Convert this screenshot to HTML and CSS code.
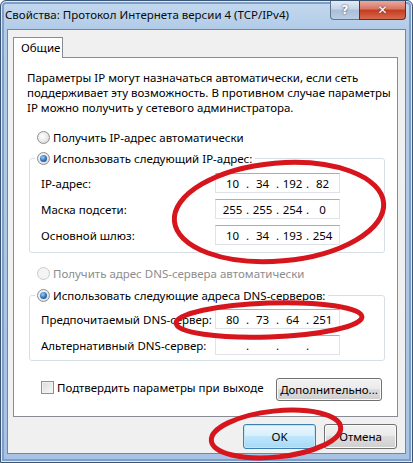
FILE: index.html
```html
<!DOCTYPE html>
<html lang="ru">
<head>
    <meta charset="UTF-8">
    <title>Свойства: Протокол Интернета версии 4 (TCP/IPv4)</title>
    <link rel="stylesheet" href="styles.css">
</head>
<body>
<div class="screen">
    <div class="window">
        <div class="titlebar">
            <span class="title">Свойства: Протокол Интернета версии 4 (TCP/IPv4)</span>
            <div class="caption-buttons">
                <span class="cap-btn help">?</span>
                <span class="cap-btn close">✕</span>
            </div>
        </div>
        <div class="client">
            <div class="tabs"><span class="tab">Общие</span></div>
            <div class="page">
                <p class="intro">Параметры IP могут назначаться автоматически, если сеть<br>поддерживает эту возможность. В противном случае параметры<br>IP можно получить у сетевого администратора.</p>

                <div class="option first"><span class="radio"></span>Получить IP-адрес автоматически</div>
                <fieldset class="group ip-group">
                    <legend><span class="option"><span class="radio checked"></span>Использовать следующий IP-адрес:</span></legend>
                    <div class="fields">
                        <div class="field"><span>IP-адрес:</span>
                            <span class="ip"><span class="oct">10</span><span class="dot">.</span><span class="oct">34</span><span class="dot">.</span><span class="oct">192</span><span class="dot">.</span><span class="oct">82</span></span></div>
                        <div class="field"><span>Маска подсети:</span>
                            <span class="ip"><span class="oct">255</span><span class="dot">.</span><span class="oct">255</span><span class="dot">.</span><span class="oct">254</span><span class="dot">.</span><span class="oct">0</span></span></div>
                        <div class="field"><span>Основной шлюз:</span>
                            <span class="ip"><span class="oct">10</span><span class="dot">.</span><span class="oct">34</span><span class="dot">.</span><span class="oct">193</span><span class="dot">.</span><span class="oct">254</span></span></div>
                    </div>
                </fieldset>

                <div class="option dns-auto disabled"><span class="radio"></span>Получить адрес DNS-сервера автоматически</div>
                <fieldset class="group dns-group">
                    <legend><span class="option"><span class="radio checked"></span>Использовать следующие адреса DNS-серверов:</span></legend>
                    <div class="fields">
                        <div class="field"><span>Предпочитаемый DNS-сервер:</span>
                            <span class="ip"><span class="oct">80</span><span class="dot">.</span><span class="oct">73</span><span class="dot">.</span><span class="oct">64</span><span class="dot">.</span><span class="oct">251</span></span></div>
                        <div class="field"><span>Альтернативный DNS-сервер:</span>
                            <span class="ip"><span class="oct"></span><span class="dot">.</span><span class="oct"></span><span class="dot">.</span><span class="oct"></span><span class="dot">.</span><span class="oct"></span></span></div>
                    </div>
                </fieldset>

                <div class="page-footer">
                    <label class="confirm"><span class="check"></span>Подтвердить параметры при выходе</label>
                    <button class="btn advanced">Дополнительно...</button>
                </div>
            </div>
            <div class="dialog-buttons">
                <button class="btn default">OK</button>
                <button class="btn">Отмена</button>
            </div>
        </div>
    </div>

    <svg class="marks" width="413" height="463" viewBox="0 0 413 463">
        <ellipse cx="279" cy="212" rx="105" ry="49" transform="rotate(-5 279 212)"/>
        <ellipse cx="269" cy="320" rx="93" ry="17" transform="rotate(-2 269 320)"/>
        <ellipse cx="276" cy="434" rx="65" ry="23" transform="rotate(-6 276 434)"/>
    </svg>
</div>
</body>
</html>
```

FILE: styles.css
```css
* {
    box-sizing: border-box;
}
body {
    margin: 0;
    font-family: "Noto Sans", sans-serif;
    font-size: 11.5px;
    color: #000;
    background: #fff;
}
.screen {
    position: relative;
    width: 413px;
    height: 463px;
}
.window {
    width: 413px;
    height: 463px;
    border: 1px solid #3b5675;
    border-radius: 6px 6px 0 0;
    background: linear-gradient(to bottom, #c4d9ef, #b2cbe7 28px, #a7c2e2);
    box-shadow: inset 0 0 0 1px #dce8f5, inset 0 0 0 3px #7f9fca;
    display: flex;
    flex-direction: column;
    overflow: hidden;
}
.titlebar {
    height: 28px;
    display: flex;
    align-items: flex-start;
}
.title {
    padding: 6px 0 0 4px;
    line-height: 16px;
    font-size: 11.5px;
    color: #0a0a0a;
    white-space: nowrap;
}
.caption-buttons {
    margin-left: auto;
    margin-right: 6px;
    display: flex;
}
.cap-btn {
    height: 19px;
    display: flex;
    align-items: center;
    justify-content: center;
    color: #fff;
    font-family: "DejaVu Sans", sans-serif;
    font-weight: bold;
    text-shadow: 0 0 2px #333;
    border: 1px solid #5f7592;
    border-top: none;
}
.help {
    width: 29px;
    font-size: 12px;
    border-radius: 0 0 0 4px;
    border-right: none;
    background: linear-gradient(to bottom, #e3ebf5, #c3d3e6 45%, #a9bed7 50%, #b9cde4);
}
.close {
    width: 47px;
    font-size: 12px;
    border-radius: 0 0 4px 0;
    border-color: #6d2a1f;
    background: linear-gradient(to bottom, #e9a99b, #d87562 45%, #c43b20 50%, #d86a4c);
}
.client {
    flex: 1;
    margin: 0 6px 8px;
    border: 1px solid #6f87a6;
    background: #f0f0f0;
    display: flex;
    flex-direction: column;
}
.tabs {
    padding: 7px 0 0 5px;
    display: flex;
}
.tab {
    width: 50px;
    height: 21px;
    padding: 2px 0 0 7px;
    line-height: 15px;
    border: 1px solid #898c95;
    border-bottom: none;
    background: #fff;
    margin-bottom: -1px;
    position: relative;
    z-index: 1;
}
.page {
    margin: 0 7px 0 5px;
    height: 360px;
    border: 1px solid #898c95;
    background: #fff;
    padding-top: 12px;
}
.intro {
    margin: 0 0 0 13px;
    line-height: 15px;
    white-space: nowrap;
}
.option {
    display: flex;
    align-items: center;
    height: 15px;
    line-height: 15px;
    white-space: nowrap;
}
.option.first {
    margin: 15px 0 0 23px;
}
.option.dns-auto {
    margin: 13px 0 0 23px;
}
.option.disabled {
    color: #8d8d8d;
}
.radio {
    flex: none;
    position: relative;
    width: 13px;
    height: 13px;
    margin-right: 3px;
    border-radius: 50%;
    border: 1px solid #8b8f94;
    background: radial-gradient(circle at 40% 40%, #ffffff, #e8e8e8 55%, #c6c8cb);
}
.radio.checked::after {
    content: "";
    position: absolute;
    inset: 2px;
    border-radius: 50%;
    background: radial-gradient(circle at 40% 35%, #9fd0f5, #2d6fbb 55%, #173f70);
}
.disabled .radio {
    border-color: #c7cacd;
    background: #f4f4f4;
}
.group {
    min-width: 0;
    margin: 6px 12px 0 15px;
    border: 1px solid #d5dfe5;
    border-radius: 3px;
    padding: 7px 11px 7px 11px;
}
.dns-group {
    margin-top: 7px;
    padding-top: 6px;
    padding-bottom: 5px;
}
.group legend {
    margin-left: -6px;
    padding: 0 3px 0 2px;
}
.fields {
    display: flex;
    flex-direction: column;
    gap: 6px;
}
.field {
    display: grid;
    grid-template-columns: 174px 125px;
    align-items: center;
    height: 20px;
    white-space: nowrap;
}
.ip {
    height: 20px;
    display: flex;
    align-items: center;
    padding-left: 4px;
    border: 1px solid #dfe3e9;
    border-top-color: #abadb3;
    background: #fff;
}
.oct {
    width: 25px;
    text-align: center;
}
.dot {
    width: 5px;
    text-align: center;
}
.page-footer {
    display: flex;
    align-items: center;
    margin: 17px 15px 0 27px;
}
.confirm {
    display: flex;
    align-items: center;
    white-space: nowrap;
    margin-top: -4px;
}
.check {
    width: 13px;
    height: 13px;
    margin-right: 3px;
    border: 1px solid #8e8f8f;
    background: linear-gradient(135deg, #d9dadb, #f9f9f9);
    box-shadow: inset 0 0 0 1px #f2f2f2;
}
.btn {
    height: 23px;
    padding: 0;
    font: inherit;
    color: #000;
    border: 1px solid #707070;
    border-radius: 3px;
    background: linear-gradient(to bottom, #f2f2f2, #ebebeb 45%, #dddddd 50%, #cfcfcf);
    box-shadow: inset 0 0 0 1px #fbfbfb;
    white-space: nowrap;
}
.advanced {
    width: 106px;
    margin-left: auto;
}
.dialog-buttons {
    display: flex;
    justify-content: flex-end;
    gap: 8px;
    padding: 7px 8px 0 0;
}
.dialog-buttons .btn {
    width: 73px;
    height: 25px;
}
.btn.default {
    border-color: #3c7fb1;
    background: linear-gradient(to bottom, #eaf6fd, #d9f0fc 45%, #bee6fd 50%, #a7d9f5);
    box-shadow: inset 0 0 0 1px #c2e5f8;
}
.marks {
    position: absolute;
    top: 0;
    left: 0;
    pointer-events: none;
}
.marks ellipse {
    fill: none;
    stroke: #d6151d;
    stroke-width: 5;
}
```
